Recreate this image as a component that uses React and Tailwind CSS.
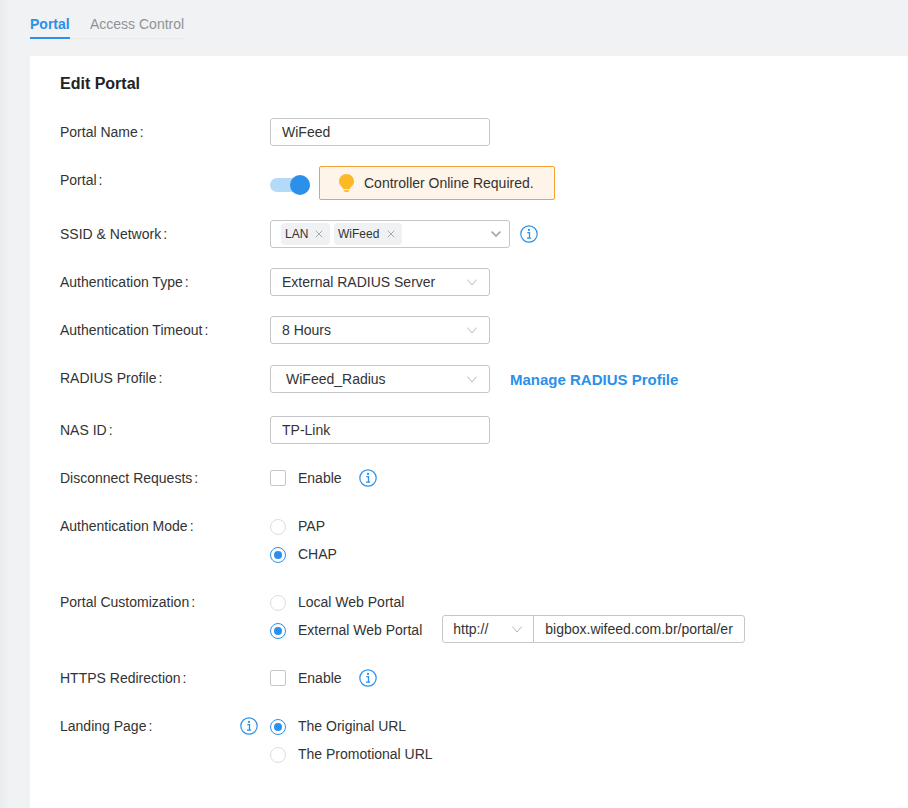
import React from 'react';

const Info = () => (
  <svg width="18" height="18" viewBox="0 0 18 18" fill="none" className="shrink-0 text-[#2b90ea]">
    <circle cx="9" cy="9" r="8.2" stroke="currentColor" strokeWidth="1.2" />
    <circle cx="9" cy="4.9" r="1.1" fill="currentColor" />
    <path d="M7.3 7.6H9.5V13M7 13.2H11.2" stroke="currentColor" strokeWidth="1.3" />
  </svg>
);

const Bulb = () => (
  <svg width="15" height="18" viewBox="0 0 15 18" className="shrink-0">
    <path d="M7.5 0C3.3 0 0 3.2 0 7.3C0 9.8 1.3 11.4 2.7 12.7C3.6 13.5 4.1 14.3 4.2 15H10.8C10.9 14.3 11.4 13.5 12.3 12.7C13.7 11.4 15 9.8 15 7.3C15 3.2 11.7 0 7.5 0Z" fill="#fdb825" />
    <rect x="4.5" y="15.8" width="6" height="1" fill="#fdb825" />
    <rect x="5.5" y="17" width="4" height="1" fill="#fdb825" />
  </svg>
);

// thin arrow used by the plain selects
const Arrow = () => (
  <svg width="10" height="7" viewBox="0 0 10 7" fill="none" className="shrink-0 text-[#b4b6b9]">
    <path d="M0.4 0.6L5 6L9.6 0.6" stroke="currentColor" strokeWidth="1" />
  </svg>
);

const Cross = () => (
  <svg width="8" height="8" viewBox="0 0 8 8" fill="none" className="shrink-0 text-[#aaa]">
    <path d="M0.8 0.8L7.2 7.2M7.2 0.8L0.8 7.2" stroke="currentColor" strokeWidth="1" />
  </svg>
);

const Row = ({ label, className = '', labelClass = '', children }) => (
  <div className={`flex items-start ${className}`}>
    <div className={`w-[210px] h-7 leading-7 shrink-0 text-[#333] ${labelClass}`}>{label}<span className="ml-[2px]">:</span></div>
    <div className="flex-1 min-w-0">{children}</div>
  </div>
);

const TextBox = ({ value }) => (
  <input
    readOnly
    value={value}
    className="block w-[220px] h-7 px-[11px] border border-[#c4c6c9] rounded-[3px] text-[#333] outline-none"
  />
);

const Select = ({ value, indent = false }) => (
  <div className={`flex items-center justify-between h-7 w-[220px] border border-[#c4c6c9] rounded-[3px] text-[#333] ${indent ? 'pl-[15px]' : 'pl-[11px]'} pr-3`}>
    <span>{value}</span>
    <Arrow />
  </div>
);

const Tag = ({ label, width }) => (
  <span className={`flex items-center justify-between h-[22px] pl-1 pr-[7px] bg-[#f0f1f3] text-xs text-[#333] rounded-sm ${width}`}>
    {label}
    <Cross />
  </span>
);

const Check = () => (
  <div className="flex items-center h-7">
    <span className="w-4 h-4 border border-[#c4c6c9] rounded-[2px] mr-3" />
    <span className="text-[#333] mr-[17px]">Enable</span>
    <Info />
  </div>
);

const Radio = ({ label, on = false }) => (
  <div className="flex items-center h-7">
    {on ? (
      <span className="flex items-center justify-center w-4 h-4 mt-0.5 rounded-full border-[1.5px] border-[#2b90ea] mr-3">
        <span className="w-2 h-2 rounded-full bg-[#2b90ea]" />
      </span>
    ) : (
      <span className="w-4 h-4 mt-0.5 rounded-full border border-[#dcdddf] mr-3" />
    )}
    <span className="text-[#333]">{label}</span>
  </div>
);

export default function App() {
  return (
    <div className="w-[908px] h-[808px] overflow-hidden bg-[linear-gradient(90deg,#ebecef,#f1f2f4_10px)] text-sm font-['Liberation_Sans',Arial,sans-serif]">
      <div className="h-14 pl-[30px] pt-[15px]">
        <div className="flex w-fit h-6 border-b border-[#e8e9eb]">
          <div className="w-10 h-6 border-b-[2px] border-[#2b90ea] font-bold text-[#2b90ea] leading-[18px]">Portal</div>
          <div className="ml-5 text-[#8f9398] leading-[18px]">Access Control</div>
        </div>
      </div>

      <div className="ml-[30px] h-[752px] bg-white pl-[30px]">
        <h1 className="pt-[18px] h-[62px] text-base font-bold text-[#222] leading-5">Edit Portal</h1>

        <div className="flex flex-col gap-5">
          <Row label="Portal Name">
            <TextBox value="WiFeed" />
          </Row>

          <Row label="Portal">
            <div className="flex items-center">
              <div className="relative w-10 h-[14px] rounded-full bg-[#b3dbf7] mt-[4px]">
                <span className="absolute right-0 -top-[3px] w-5 h-5 rounded-full bg-[#2b90ea]" />
              </div>
              <div className="flex items-center ml-[9px] w-[236px] h-[34px] pl-[19px] border border-[#f7a035] rounded-[2px] bg-[#fef4e9] text-[#333]">
                <Bulb />
                <span className="ml-[10px]">Controller Online Required.</span>
              </div>
            </div>
          </Row>

          <Row label="SSID & Network">
            <div className="flex items-center">
              <div className="flex items-center justify-between w-[240px] h-7 pl-[10px] pr-2 border border-[#c4c6c9] rounded-[3px]">
                <div className="flex gap-1">
                  <Tag label="LAN" width="w-[49px]" />
                  <Tag label="WiFeed" width="w-[68px]" />
                </div>
                <svg width="10" height="6" viewBox="0 0 10 6" fill="none" className="shrink-0 text-[#a0a2a5]">
                  <path d="M0.6 0.6L5 5L9.4 0.6" stroke="currentColor" strokeWidth="1.6" />
                </svg>
              </div>
              <span className="ml-[10px]"><Info /></span>
            </div>
          </Row>

          <Row label="Authentication Type">
            <Select value="External RADIUS Server" />
          </Row>

          <Row label="Authentication Timeout">
            <Select value="8 Hours" />
          </Row>

          <Row label="RADIUS Profile" className="mt-px" labelClass="-mt-px">
            <div className="flex items-center">
              <Select value="WiFeed_Radius" indent />
              <a className="ml-5 mt-px text-[15px] font-bold text-[#2b90ea]">Manage RADIUS Profile</a>
            </div>
          </Row>

          <Row label="NAS ID" className="mt-[3px]">
            <TextBox value="TP-Link" />
          </Row>

          <Row label="Disconnect Requests">
            <Check />
          </Row>

          <Row label="Authentication Mode">
            <Radio label="PAP" />
            <Radio label="CHAP" on />
          </Row>

          <Row label="Portal Customization">
            <Radio label="Local Web Portal" />
            <div className="flex items-start">
              <Radio label="External Web Portal" on />
              <div className="flex ml-5 -mt-px">
                <div className="flex items-center justify-between w-[92px] h-7 pl-[10px] pr-[11px] border border-[#c4c6c9] rounded-l-[3px] text-[#333]">
                  <span>http://</span>
                  <Arrow />
                </div>
                <input
                  readOnly
                  value="bigbox.wifeed.com.br/portal/er"
                  className="w-[212px] h-7 -ml-px pl-[11px] pr-1 border border-[#c4c6c9] rounded-r-[3px] text-[#333] outline-none"
                />
              </div>
            </div>
          </Row>

          <Row label="HTTPS Redirection">
            <Check />
          </Row>

          <div className="flex items-start">
            <div className="w-[180px] h-7 leading-7 shrink-0 text-[#333]">Landing Page<span className="ml-[2px]">:</span></div>
            <div className="flex items-center h-7 w-[30px] shrink-0"><Info /></div>
            <div>
              <Radio label="The Original URL" on />
              <Radio label="The Promotional URL" />
            </div>
          </div>
        </div>
      </div>
    </div>
  );
}
